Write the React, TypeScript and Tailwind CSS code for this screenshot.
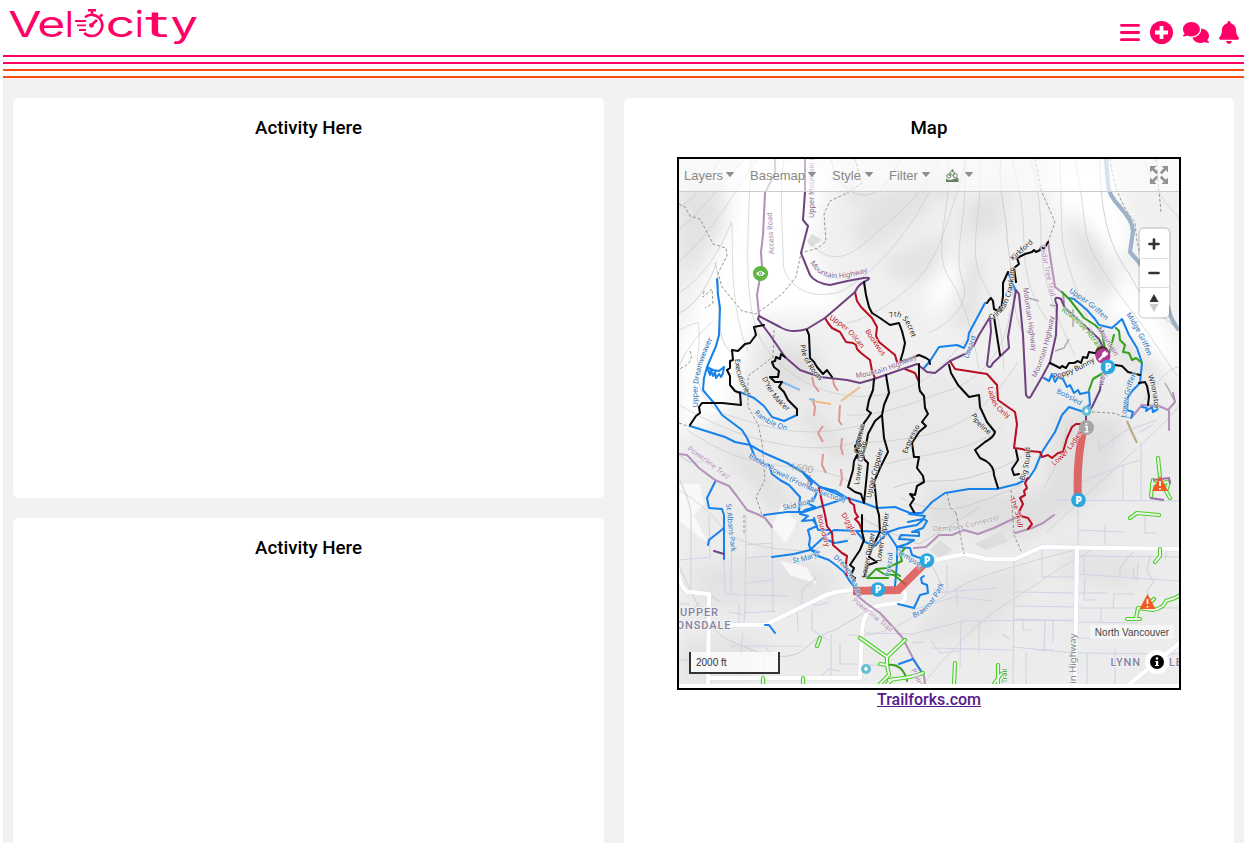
import React from "react";
import { FaBars, FaCirclePlus, FaComments, FaBell } from "react-icons/fa6";

const contours = [
  "M679 208 Q700 195 720 159", "M679 229 C700 214 716 190 744 159", "M679 261 C705 240 722 213 757 159",
  "M679 293 C715 271 733 219 731 222 C735 225 726 300 748 351", "M679 313 C705 302 720 255 715 263 C724 286 711 337 731 352",
  "M679 330 Q704 318 698 326 C705 345 680 391 724 414 C770 428 803 440 862 425",
  "M751 159 C748 238 742 300 761 340 C785 383 844 408 897 391 C940 379 950 353 966 340",
  "M784 159 C778 200 785 260 783 265 C787 286 811 302 842 291 C880 270 913 225 929 192",
  "M811 244 C836 270 855 250 870 239 C899 212 917 202 940 159", "M831 159 C839 199 870 202 884 186 L901 159",
  "M847 323 C878 317 918 284 929 264 C945 238 954 199 957 192 L967 159", "M948 159 C953 210 930 250 950 279 Q970 310 979 370",
  "M964 159 C970 210 952 250 962 279 C971 301 955 320 929 333", "M979 159 C985 210 965 249 983 282 C994 300 1006 338 1003 370",
  "M1001 159 C997 190 1008 218 1007 240 C1014 280 1010 310 1024 335", "M1012 159 Q1024 201 1024 245 T1047 320",
  "M1031 159 Q1042 200 1041 242 T1075 356", "M1060 159 Q1061 205 1062 235 T1107 365",
  "M1075 159 C1087 220 1082 233 1094 255 C1112 289 1136 314 1154 342 L1177 376",
  "M1100 159 C1100 220 1112 251 1129 273 Q1140 300 1179 330", "M1144 159 Q1152 190 1179 218",
  "M847 415 C888 418 930 394 954 389 C996 370 1009 331 1010 310", "M860 443 C910 440 940 435 970 417 Q1000 392 1018 362",
  "M886 464 C933 451 977 452 1001 426", "M893 488 C923 475 948 487 981 474 Q1004 468 1022 456", "M679 405 Q730 435 779 444 T858 441",
  "M687 430 Q735 463 782 466 T850 482", "M679 366 Q692 338 713 321", "M679 490 Q705 505 722 527 T809 551 L850 538",
  "M679 566 C698 607 705 622 723 637 C760 656 784 662 802 651 Q821 633 835 630 L867 611",
  "M848 635 Q876 639 907 621 Q950 590 974 580 T1074 550", "M925 682 Q967 629 1004 605 L1034 586 Q1070 560 1097 548",
  "M1046 533 Q1090 491 1135 450 T1179 404", "M1140 405 Q1168 366 1179 367",
  "M855 514 Q880 530 919 544 Q954 524 980 507", "M901 498 Q938 516 970 505 T1022 485", "M1044 488 Q1063 455 1067 427",
];
const streets = [
  "M691 515 L691 589 M680 560 L710 557 L709 515 M715 576 L725 576 M724 555 L725 594 L741 595 M732 515 L731 594",
  "M746 515 L745 613 L776 611 M772 528 L773 612 M745 545 L772 543 M745 558 L772 556 M746 583 L772 580 M745 595 L790 596",
  "M709 594 L721 603 M739 603 L739 624 M729 612 L743 615 M745 612 L744 622 M690 604 L679 604",
  "M743 632 L741 648 L744 670 L743 678 M763 656 L763 678 M730 646 L802 646 M764 646 L775 658",
  "M816 578 L802 590 L802 604 L820 605 L829 602 M797 608 L798 631 M831 634 L831 678 M840 643 L840 664 L859 664",
  "M812 610 L812 630 L828 640 M820 678 L828 669 L841 671 M679 660 L704 660 M688 617 L699 603",
  "M866 665 L898 665 M866 633 L912 634 L964 621 L1075 620 M961 621 L960 667 M979 621 L979 653",
  "M913 610 L954 597 L992 601 M957 588 L957 604 M947 565 L947 592 L997 588 M933 567 L945 593 L934 590",
  "M1014 559 L1013 684 M931 648 L1011 650 M1002 634 L1010 639 M931 641 L940 653 L959 651",
  "M1042 546 L1042 577 L1075 577 M1013 592 L1073 593 M1013 606 L1075 607 M1013 619 L1073 621 M1013 647 L1073 653",
  "M1023 621 L1023 630 L1031 630 M1045 620 L1044 652 M1053 621 L1053 642 M1026 653 L1026 684 M1038 650 L1054 650",
  "M1077 556 L1179 557 M1077 574 L1179 581 M1077 593 L1107 593 M1078 608 L1179 608 M1077 622 L1138 623 M1077 653 L1179 654",
  "M1084 555 L1084 574 M1085 578 L1084 600 L1097 600 M1112 594 L1134 594 M1114 595 L1113 608 M1133 552 L1120 568 L1120 578",
  "M1133 568 L1134 579 L1138 579 M1138 563 L1137 580 M1150 557 L1147 571 L1154 582 L1147 590 L1150 608 M1167 550 L1165 560",
  "M1078 638 L1105 638 M1087 653 L1087 684 M1115 649 L1115 684 M1101 608 L1101 623 M1105 545 L1105 525",
  "M1056 500 L1179 501 M1080 482 L1123 465 L1123 500 M1098 451 L1123 432 L1157 420 M1141 443 L1141 500 M1123 465 L1140 460",
  "M1078 501 L1078 546 M1145 515 L1145 533 L1157 533 M1100 448 L1098 438 M1114 434 L1113 447 M1078 530 L1124 532",
  "M679 479 Q690 500 691 515 M679 455 L689 462 L708 462 M912 643 L925 642 M1140 432 L1153 425",
];
const roads = [
  "M677 564 Q680 592 690 592 L709 594 L708 684", "M708 678 L860 678 L862 632 Q863 611 877 606 Q891 603 901 603 Q908 598 904 591",
  "M729 625 H765 L820 598 Q834 590 857 590", "M926 562 L964 554 L987 559 H1015 L1042 547 L1180 549", "M1077 548 L1075 684", "M1182 641 L1127 686",
];
const dashed = [
  "M679 204 L685 207 L690 216 L700 219 L710 238 L713 244 L726 248 L727 256 L718 273 L722 287 L742 311 L756 314 L767 306 L783 293 L796 277 L801 253 L818 248 L826 241 L824 214 L830 201 L847 193 L862 183 L855 159",
  "M704 291 L703 297 L712 289 L713 303 L705 308 M690 351 Q695 363 679 369 M679 423 L690 427",
  "M774 330 L773 357 L748 376 L748 407 L758 424 L762 442 L765 480 L756 497 L762 515",
  "M1035 159 L1041 190 L1055 222 L1048 242 M1110 159 Q1115 199 1135 222 Q1137 250 1143 260 M1156 159 L1161 212",
  "M1092 412 L1113 413 L1129 418 M1011 490 L1014 535 L1022 553 M947 493 L950 507 L957 514 M956 513 L964 554 M744 515 L744 535",
];
type Line = { d: string; c: string };
const BLUE = "#1682ea", RED = "#bb0d20", PURPLE = "#70427f", LILAC = "#b491b8", GREEN = "#35a11d", BLACK = "#080808";
const trails: Line[] = [
  { c: LILAC, d: "M775 159 L775 173 L765 193 L763 235 L761 252 L762 266 L757 295 L759 315" },
  { c: LILAC, d: "M679 454 L687 455 L699 468 L715 480 L729 486 L736 495 L747 510 L757 514 L765 518 L772 527 M854 593 L866 603 L880 613 L891 625 L902 637 L914 660 L924 676 L925 684" },
  { c: LILAC, d: "M914 548 L926 547 L939 535 L952 535 L964 530 L978 534 L994 528 L1017 517 M1015 533 L1032 528 L1043 523 L1054 515 M1132 417 L1142 405 L1159 406 L1168 410 L1175 402 L1173 393 M1169 411 L1169 430 M1048 242 L1052 268 L1055 287 L1063 293 L1064 303" },
  { c: BLUE, d: "M717 279 L718 295 L720 308 L719 335 L716 346 L707 367 L710 375 L711 370 L713 376 L715 372 L716 378 L719 374 L721 377 L723 373 L724 367 L719 371 L713 370 L707 367 L704 378 L703 390 L707 395 L714 403 L722 415 L742 430 L747 438 L750 445 L764 453 L787 463 L804 473 L820 487 L836 491 L847 498 L864 503 L877 508 L895 507 L910 513 L922 513 L932 502 L945 493 L969 489 L997 489 L1017 484 L1029 478 L1035 469 L1042 452 L1055 432 L1062 415 L1069 407 L1084 412" },
  { c: BLUE, d: "M690 426 L725 437 L735 442 L750 445 L755 457 L762 463 L769 465 L772 474 L780 480 L789 485 L800 497 L799 512 M764 515 L787 512 L804 512 L847 498 M820 487 L837 494 L845 499" },
  { c: BLUE, d: "M740 392 L754 398 L764 406 L772 417 L784 421 L797 415 M924 368 L930 361 L939 347 L957 345 L964 348 L968 340 L969 333 L985 303 M1008 272 L1016 292" },
  { c: BLUE, d: "M1069 298 L1074 299 L1087 310 L1095 319 L1099 325 L1112 328 L1122 319 L1129 335 L1137 348 L1142 363 L1140 383 L1133 390 L1128 397 L1127 410 L1133 412 L1131 418 M1044 378 L1049 381 L1052 374 L1055 382 L1058 377 L1063 379 L1067 387 L1070 385 L1074 393 L1078 390 L1080 394 L1089 392 L1090 405 L1085 408 M1142 407 L1147 408 L1146 411 L1152 407 L1153 412 L1158 409" },
  { c: BLUE, d: "M772 557 L794 554 L810 550 L824 537 L834 530 L860 531 L887 532 L897 547 L897 563 L895 586 M810 548 L818 556 L829 560 L837 566 L844 572 L849 580 L856 589 M715 482 L707 498 L709 508 L722 509 L724 515 L724 559 M724 528 L709 540 L708 545" },
  { c: BLUE, d: "M804 474 L812 483 L808 488 L817 492 L814 499 L807 503 L815 507 L805 510 L800 514 L808 516 L802 521 L813 520 L817 526 L808 530 L810 538 L809 545 L811 550 M814 518 L818 530 L830 530 M827 540 L835 543 L847 541 M810 550 L819 552" },
  { c: BLUE, d: "M857 532 L865 542 L875 546 L888 532 L900 528 L917 525 L924 519 L927 521 L923 528 L912 532 L919 532 L919 536 L901 535 L899 539 L914 540 L907 544 L897 547 L910 548 L912 555 L917 557 L927 560 M909 514 L925 516 L923 519 L908 522 M765 625 L769 625 L775 633 M924 576 L921 578 L922 583 L927 585 L928 593 L920 595 L914 608 L898 604 M899 664 L913 659 L923 674" },
  { c: RED, d: "M825 318 L828 323 L832 328 L840 332 L846 342 L853 343 L856 345 L857 349 L861 353 L870 360 L872 371 L875 378 M855 292 L857 301 L861 307 L872 318 L877 327 L876 336 L879 342 L895 355 L897 362 M905 369 L915 373 L919 382 M950 361 L955 369 L987 374 L997 385 L998 400 L1015 412 L1017 424 L1014 448 L1022 449 L1029 451 L1040 452 L1042 457 L1048 455 L1052 458 L1058 453 L1063 452 L1067 438 L1072 427 L1076 424 L1083 424" },
  { c: RED, d: "M1028 478 L1025 483 L1027 488 L1024 491 L1025 495 L1020 498 L1023 504 L1019 512 L1021 516 L1028 518 L1032 524 L1028 529 M819 488 L822 502 L825 515 L827 526 L832 533 L833 545 L842 553 L847 556 L846 563 L847 575 M849 498 L850 502 L854 505 L855 512 L858 517 L855 519 L859 523 L862 530" },
  { c: PURPLE, d: "M805 159 L805 192 L803 220 L808 226 L801 253 L810 275 Q815 283 830 285 Q850 280 864 278 Q874 277 864 282 Q858 285 855 292 L847 299 L825 318 L807 329 Q791 334 780 327 L759 316 L758 319 L770 335 L785 357 L800 370 L820 377 L847 380 L860 383 L874 379 L917 364 L927 372 L935 373 L950 361 L967 353 L974 345 L979 335 L990 317 L991 331 L987 365 Q990 370 993 363 L1009 348 L1008 337 L1016 290 L1019 294 L1023 335 L1026 395 Q1029 400 1031 396 L1042 377 L1050 362 L1056 335 L1057 305 Q1052 295 1061 299 L1065 308 L1084 325 L1099 339 L1105 352 M1102 375 L1100 390 L1092 407 L1086 415 L1086 425 M714 551 L724 554" },
  { c: GREEN, d: "M1062 292 L1070 300 L1084 318 L1095 325 L1102 332 L1105 350 M1116 328 L1119 331 L1120 340 L1125 345 L1123 352 L1129 353 L1132 360 L1136 358 L1142 363 M1114 335 L1109 354 M1103 373 L1093 379 L1089 390 M905 548 L900 554 L902 561 L887 568 L876 569 L884 574 L894 575 L905 584 M891 570 L900 576 M875 570 L867 578 L888 578 M887 665 Q903 663 907 681" },
  { c: BLACK, d: "M764 325 L754 327 L756 335 L750 343 L745 344 L741 348 L738 351 L732 350 L733 360 L730 361 L730 368 L727 370 L730 376 L730 385 L735 391 L740 393 L741 405 L722 403 L702 403 L699 407 L700 413 L696 416 L690 425 M785 357 L781 354 L780 359 L776 357 L775 361 L772 362 L774 367 L779 371 L778 377 L770 377 L775 382 L782 382 L779 387 L784 392 L788 400 L797 409 L797 415" },
  { c: BLACK, d: "M807 330 L809 335 L810 358 L814 362 L817 367 L823 374 L827 370 L832 377 M864 282 L866 295 L869 307 L872 313 L880 318 L890 325 L899 323 L902 331 L905 343 L903 352 L900 362 L909 359 L919 355 L926 358 L929 360 L930 364 M987 303 L989 300 L991 298 L993 301 L994 309 L998 311 L1000 307 L1001 311 L1003 296 L1003 283 L1008 272 M1016 282 L1014 268 L1019 264 L1017 258 L1025 254 L1032 252 L1034 250 L1036 252 L1040 250 L1041 247 L1044 249 L1048 242" },
  { c: BLACK, d: "M874 379 L873 390 L869 400 L867 410 L871 413 L867 419 L864 423 L862 431 L859 435 L860 441 L855 446 L858 453 L854 461 L853 470 L848 487 L855 492 L861 494 L864 503 M886 375 L889 393 L884 405 L882 415 L875 421 L868 434 L866 445 L863 454 L864 459 L868 463 L864 503 M882 415 L884 438 L888 452 L880 468 L874 482 L875 489 L877 508 L879 515 L880 532 L872 548 L869 557 L877 562 L868 565 L864 577" },
  { c: BLACK, d: "M919 364 L919 386 L920 391 L924 396 L925 408 L928 414 L922 422 L926 426 L919 432 L912 443 L914 457 L919 457 L917 468 L923 476 L924 482 L917 486 L915 495 L910 494 L914 499 L910 505 L914 512 M949 365 L951 373 L958 385 L969 397 L979 395 L980 407 L987 422 L995 432 Q994 437 985 442 L975 450 L980 458 L986 461 Q994 466 994 475 L998 488" },
  { c: BLACK, d: "M1050 363 L1056 366 L1060 368 L1062 366 L1066 368 L1069 363 L1074 363 L1078 361 L1081 363 L1083 357 L1087 358 L1089 352 L1094 353 L1102 352 M1115 365 L1122 366 L1128 372 L1140 375 M1139 383 L1145 382 L1147 386 L1149 396 L1148 405 M1016 450 L1018 460 L1012 469 L1014 475 L1019 474 M862 515 L862 532 L864 540 L860 550 L850 565 L854 568 L851 575 L855 578 L853 582" },
  { c: BLACK, d: "M994 317 L1000 355 M860 433 L857 442 L861 445 L855 450 L860 452 L857 458" },
];
const outlined = [
  "M860 638 L887 657 L905 640 M887 657 V665 L880 664 M887 665 L889 675 L880 684 M889 680 L910 677 L923 673 M887 684 L893 679",
  "M955 663 L954 684 M998 665 V684 M994 684 L1001 674 M820 638 L817 646 M803 678 V684 M763 678 V684",
  "M1158 458 L1160 477 M1153 480 L1151 496 M1130 518 L1137 513 L1159 515 M1160 549 L1160 556 L1155 562",
  "M1127 619 H1140 M1136 618 L1138 608 L1153 610 Q1164 608 1166 601 L1175 598 L1182 594 M1144 607 L1154 599",
  "M1152 484 L1169 482 L1166 491 L1170 498",
];
type Lb = [string, string, string, number?];
const labels: Lb[] = [
  ["Access Road", "M774 254 L772 215", "#b18cb5"], ["Upper Mountain Highway", "M814 218 L814 130", "#855d91"],
  ["Mountain Highway", "M810 263 Q824 287 864 273", "#855d91"], ["Mountain Highway", "M856 378 Q885 374 916 359", "#855d91"],
  ["Mountain Highway", "M1023 288 L1032 352", "#855d91"], ["Mountain Highway", "M1036 378 Q1050 347 1054 316", "#855d91"],
  ["Upper Oilcan", "M829 319 Q847 328 862 350", RED], ["Bookwus", "M865 331 Q872 343 883 357", RED],
  ["7th Secret", "M890 318 Q904 311 912 338", "#181818"], ["Kirkford", "M1013 261 L1032 244", "#181818"],
  ["Crinkum Crankum", "M990 320 Q1011 313 1014 275", "#181818"], ["Cedar Tree Trail", "M1040 245 L1051 299", "#b18cb5"],
  ["Upper Griffen", "M1069 292 Q1085 302 1104 319", "#2370bd"], ["Midge Griffen", "M1126 315 Q1137 329 1148 357", "#2370bd"],
  ["Roadside Attraction", "M1061 311 Q1086 326 1111 369", GREEN], ["Mountain", "M1097 329 L1112 352", "#855d91"], ["way", "M1103 386 L1106 374", "#855d91"],
  ["Poppy Bunny", "M1054 379 Q1074 374 1094 362", "#181818"], ["Bobsled", "M1056 393 Q1068 398 1081 406", "#2370bd"],
  ["Upper Dreamweaver", "M698 407 Q694 377 712 340", "#2370bd"], ["Lower Griffen", "M1126 418 Q1127 396 1135 377", "#2370bd"],
  ["Whonator", "M1148 376 Q1153 389 1154 406", "#181818"], ["Executioner", "M735 359 Q735 376 747 396", "#181818"],
  ["D'Yer Mak'er", "M762 378 Q771 399 788 412", "#181818"], ["Ramble On", "M754 413 Q765 425 785 430", "#2370bd"],
  ["Pile of Roots", "M800 345 Q803 365 819 380", "#181818"], ["Lizzard", "M968 359 Q973 346 977 333", "#2370bd"],
  ["Baden Powell (Fromme Section)", "M748 457 Q792 486 842 502", "#2370bd"], ["Skid Road", "M783 510 Q801 508 818 500", "#2370bd"],
  ["Powerline Trail", "M687 450 Q702 459 725 478", "#b18cb5"], ["Powerline Trail", "M852 601 Q870 616 890 632", "#b18cb5"],
  ["St Albans Park", "M726 504 L731 550", "#2370bd"], ["St Marys", "M793 563 Q815 561 825 548", "#2370bd"],
  ["Boundary", "M817 515 L825 547", RED], ["Diggler", "M841 515 Q848 524 853 539", RED],
  ["Dreamweaver", "M833 558 Q850 570 857 596", "#2370bd"], ["Ladies Only", "M988 387 Q990 409 1008 418", RED],
  ["Lower Ladies", "M1054 466 Q1073 451 1083 431", RED], ["Pipeline", "M971 415 Q975 425 989 435", "#181818"],
  ["Expresso", "M907 454 Q911 441 918 430", "#181818"], ["Lower Oilcan", "M859 485 Q862 462 867 441", "#181818"],
  ["Upper Crippler", "M871 498 Q875 477 883 451", "#181818"], ["Crowmie", "M859 454 L864 427", "#181818"],
  ["Lower Crippler", "M881 562 Q884 538 889 514", "#181818"], ["Lower Digger", "M866 578 L874 538", "#181818"],
  ["Big Stupid", "M1024 481 Q1030 465 1030 449", "#181818"],
  ["The Skull", "M1009 499 Q1017 510 1018 532", RED], ["Dempsey Connector", "M933 531 Q957 532 997 520", "#a498a7"],
  ["Dempsey", "M895 553 Q909 560 922 569", "#2370bd"], ["Penzoil", "M890 577 L893 553", "#2370bd"], ["Braemar Park", "M914 618 Q932 610 941 590", "#2370bd"],
  ["Mountain Highway", "M1076 719 L1076 637", "#8b8989", 9.6], ["Trail", "M1007 683 L1007 665", GREEN], ["Prairie", "M911 670 L922 692", "#a084a4"],
];

// Continues a label's baseline in its final direction so long names are never clipped.
function extend(d: string) {
  const n = (d.match(/-?\d+(\.\d+)?/g) ?? []).map(Number);
  const [ax, ay, bx, by] = n.slice(-4);
  const k = 30 / Math.hypot(bx - ax, by - ay);
  return `${d} L${(bx + (bx - ax) * k).toFixed(1)} ${(by + (by - ay) * k).toFixed(1)}`;
}

function Parking({ x, y }: { x: number; y: number }) {
  return <g><circle cx={x} cy={y} r="7.3" fill="#2aa7de" /><text x={x} y={y + 3.8} textAnchor="middle" fontSize="10.5" fontWeight="800" fill="white" fontFamily="Open Sans, sans-serif">P</text></g>;
}
function Warning({ x, y }: { x: number; y: number }) {
  return <g transform={`translate(${x} ${y})`}><path d="M0 -8 L8 7 H-8Z" fill="#f15a20" /><path d="M0 -3 V2 M0 4 V5.5" stroke="white" strokeWidth="1.7" /></g>;
}

function TrailMap() {
  return (
    <svg className="block h-[525px] w-[500px]" viewBox="679 159 500 525" aria-label="Trail map">
      <defs><filter id="soft" x="-40%" y="-40%" width="180%" height="180%"><feGaussianBlur stdDeviation="9" /></filter></defs>
      <rect x="679" y="159" width="500" height="525" fill="#f0f0f0" />
      <g filter="url(#soft)">
        <path d="M679 350 L760 330 L860 395 L1020 370 L1179 390 V684 H679Z" fill="#ececec" />
        <path d="M735 159 H835 L810 250 L850 310 L760 315 L727 410 L679 435 V340 L728 230Z" fill="#fff" />
        <path d="M679 190 L715 179 L725 220 L700 260 L679 280Z M850 230 L879 190 L936 175 L925 215 L865 253Z M885 258 L953 232 L925 285 L888 275Z M960 205 L1010 184 L1000 230 L964 241Z" fill="#e2e2e2" />
        <path d="M926 286 L958 255 L960 285 L930 320Z M1045 159 H1110 L1133 244 L1110 262 L1060 224Z M1108 270 L1138 275 L1150 300 L1179 350 V380 L1105 310Z" fill="#fff" />
        <path d="M840 390 L940 370 L1010 400 L1005 470 L930 480 L850 460Z" fill="#e9e9e9" />
        <path d="M1065 205 L1100 243 L1120 290 L1105 297 L1075 250Z M1058 410 L1127 420 L1110 489 L1020 540 L965 525 L1045 490Z M930 487 L1035 490 L1010 518 L920 535Z M760 345 L820 350 L822 385 L775 390Z M710 435 L755 455 L804 520 L773 510Z" fill="#dfdfdf" />
        <path d="M691 568 L775 552 L840 575 L825 604 L700 607Z M1060 545 L1150 560 L1130 590 L1060 580Z M958 575 L1040 568 L990 635 L908 645Z M679 641 L765 636 L750 684 H679Z" fill="#e3e3e3" />
        <path d="M844 190 L867 196 M935 197 L955 180 M975 258 L964 330 M1107 338 L1160 377 M805 410 L845 460" stroke="#dadada" strokeWidth="12" />
      </g>
      <path d="M680 484 L700 484 L704 504 L694 515 L708 543 L680 522Z M772 527 L782 504 L797 522 L786 543Z M780 561 L806 567 L817 584 L790 575Z" fill="#fafafa" opacity=".85" />
      <path d="M812 234 L822 240 L811 247 L807 241Z M930 550 L940 540 L953 550 L940 558Z M974 544 L1002 531 L1008 542 L986 550Z" fill="#dddddd" />
      <g fill="none">
        <g stroke="#c5c5c5" strokeWidth=".8">{contours.map((d, i) => <path key={i} d={d} opacity={i % 5 === 4 ? 1 : 0.75} />)}</g>
        <g stroke="#d0d3e4" strokeWidth="1.1">{streets.map((d, i) => <path key={i} d={d} />)}</g>
        <g stroke="#deddeb" strokeWidth="5.2" strokeLinejoin="round">{roads.map((d, i) => <path key={i} d={d} />)}</g>
        <g stroke="#fff" strokeWidth="4" strokeLinejoin="round">{roads.map((d, i) => <path key={i} d={d} />)}</g>
        <g stroke="#979488" strokeWidth="1" strokeDasharray="3 2">{dashed.map((d, i) => <path key={i} d={d} />)}</g>
        <path d="M1106 159 L1108 184 Q1108 194 1120 207 Q1133 221 1133 231 L1130 252 L1143 267 L1168 307 Q1171 321 1179 330" stroke="#9eb3c8" strokeWidth="4.2" />
        <path d="M812 377 L814 385 L819 392 M833 378 L834 385 L838 391 M812 399 L815 407 L814 416 M840 405 L839 421 L842 425 M823 426 L818 433 L823 442 M842 438 L841 448 L843 455 M823 454 L822 465 L826 473 M841 469 L842 479 L840 486 M810 475 L808 484" stroke="#dc9898" strokeWidth="2" />
        <path d="M812 401 L831 404 M841 401 L860 387" stroke="#efbd84" strokeWidth="2" /><path d="M780 381 L800 390 M809 399 L815 400" stroke="#87bdeb" strokeWidth="2" />
        <path d="M1028 298 L1039 301 M1050 305 L1056 306 M1073 309 L1073 327 M1055 351 L1064 348 L1069 339 M1165 383 L1169 390 L1174 400" stroke="#aaa" strokeWidth="1.5" />
        <path d="M1127 421 L1130 428 L1137 443" stroke="#b9a77e" strokeWidth="2" />
        <g strokeWidth="2.05" strokeLinejoin="round" strokeLinecap="round">{trails.map((t, i) => <path key={i} d={t.d} stroke={t.c} />)}</g>
        <g stroke="#49cf26" strokeWidth="4.2" strokeLinecap="round" strokeLinejoin="round">{outlined.map((d, i) => <path key={i} d={d} />)}</g>
        <g stroke="#f0f3ed" strokeWidth="2" strokeLinecap="round" strokeLinejoin="round">{outlined.map((d, i) => <path key={i} d={d} />)}</g>
        <path d="M1153 480 L1169 478 L1170 484 M1150 498 L1164 500" stroke="#9d6ca3" strokeWidth="2" />
        <path d="M853 591 L898 590 L927 561 M1084 426 Q1076 461 1078 499" stroke="#d44" strokeOpacity=".78" strokeWidth="8" />
      </g>
      <text x="790" y="470" fontSize="10" fill="#aaa99f" fontFamily="Open Sans, sans-serif" transform="rotate(8 790 470)">1600</text>
      <g fontFamily="Noto Sans, Open Sans, sans-serif" stroke="#f4f4f4" strokeOpacity=".75" strokeWidth="1.2" paintOrder="stroke" strokeLinejoin="round">
        {labels.map(([t, d, c, s], i) => <React.Fragment key={i}><path id={`trail-${i}`} d={extend(d)} fill="none" stroke="none" /><text fill={c} fontSize={s ?? 7.2}><textPath href={`#trail-${i}`}>{t}</textPath></text></React.Fragment>)}
      </g>
      <g fill="#85849e" stroke="#f2f2f5" strokeWidth="2" paintOrder="stroke" fontFamily="Roboto, sans-serif" fontSize="11" fontWeight="500" letterSpacing=".9">
        <text x="680" y="615.5">UPPER</text><text x="670" y="628.7">LONSDALE</text><text x="1110.5" y="666">LYNN</text><text x="1169" y="666">LEY</text>
      </g>
      <g transform="translate(760.5 273.5)"><circle r="7.6" fill="#61b744" /><path d="M-4.5 0 Q0 -5 4.5 0 Q0 5 -4.5 0Z" fill="white" /><circle r="1.8" fill="#61b744" /><circle r=".8" fill="white" /></g>
      <circle cx="1102" cy="353" r="7" fill="#4c3021" /><circle cx="1103" cy="356" r="7.5" fill="#b03a94" /><path d="M1099.5 359.5 L1104 355 M1103 354 L1105 352 M1104 356 L1107 353.5" stroke="white" strokeWidth="2.3" strokeLinecap="round" />
      <Parking x={1108} y={367} /><Parking x={1078.5} y={500} /><Parking x={927} y={560.5} /><Parking x={878} y={589.5} />
      <g fill="#62bfd4"><circle cx="1086.5" cy="411" r="5" /><circle cx="866" cy="669" r="5" /></g><path d="M1086.5 408 l2 3 q-2 4 -4 0Z M866 666 l2 3 q-2 4 -4 0Z" fill="white" />
      <circle cx="1086.5" cy="427.5" r="7.5" fill="#a5a5a5" /><path d="M1086.5 422.8 v2 M1085 426.5 h2 v5 M1084.5 431.8 h4" stroke="white" strokeWidth="1.6" fill="none" />
      <Warning x={1160} y={484} /><Warning x={1147.5} y={602} />
    </svg>
  );
}
const Caret = () => <svg className="mb-0.5 h-[5px] w-2" viewBox="0 0 8 5"><path d="M0 .5 Q0 0 .5 0 H7.5 Q8 0 8 .6 L4.6 4.6 Q4 5.2 3.4 4.6 L0 .6Z" fill="#8e8e8e" /></svg>;

function MapPanel() {
  return (
    <div className="relative h-[533px] w-[504px] shrink-0 overflow-hidden border-2 border-black bg-white">
      <TrailMap />
      <div className="absolute inset-x-0 top-0 flex h-[33px] items-center border-b border-[#cccccc] bg-white/60 pl-[5px] pt-px font-['Liberation_Sans',sans-serif] text-[13px] text-[#888888]">
        <div className="flex w-[66px] items-center gap-[3px]"><span>Layers</span><Caret /></div>
        <div className="flex w-[82px] items-center gap-[3px]"><span>Basemap</span><Caret /></div>
        <div className="flex w-[57px] items-center gap-1"><span>Style</span><Caret /></div>
        <div className="flex w-[57px] items-center gap-1"><span>Filter</span><Caret /></div>
        <div className="flex items-center gap-[6px]">
          <svg className="h-[14px] w-[13px]" viewBox="0 0 13 14"><path d="M0 9.5 C4 13 7 9 12.5 9 V13 H0Z" fill="#648461" /><g fill="none" stroke="#648461"><circle cx="2.8" cy="7" r="2" /><circle cx="9.3" cy="6.7" r="2" /><path d="M3 7 L4.5 4 L7 6.5 L9 4 L5.5 2 L3.6 4" /></g><circle cx="6.5" cy="1.4" r="1.1" fill="#648461" /></svg><Caret />
        </div>
      </div>
      <svg className="absolute left-[471px] top-[7px] h-[18px] w-[18px]" viewBox="0 0 18 18" fill="#929292" stroke="#929292">
        {[0, 90, 180, 270].map((a) => <g key={a} transform={`rotate(${a} 9 9)`}><path d="M0 0 H6.5 L0 6.5Z" stroke="none" /><path d="M2.5 2.5 L7.2 7.2" strokeWidth="2.7" /></g>)}
      </svg>
      <div className="absolute left-[461px] top-[70px] flex h-[88px] w-[29px] flex-col rounded bg-white shadow-[0_0_0_2px_rgba(0,0,0,0.1)]">
        <div className="flex h-[30px] items-center justify-center border-b border-[#ddd] pr-px"><svg className="h-3 w-3" viewBox="0 0 12 12"><path d="M6 1.5 V10.5 M1.5 6 H10.5" stroke="#333" strokeWidth="2.7" strokeLinecap="round" /></svg></div>
        <div className="flex h-[29px] items-center justify-center border-b border-[#ddd] pr-px"><svg className="h-3 w-3" viewBox="0 0 12 12"><path d="M1.5 6 H10.5" stroke="#333" strokeWidth="2.7" strokeLinecap="round" /></svg></div>
        <div className="flex flex-1 items-center justify-center pr-px"><svg className="h-[18px] w-[10px]" viewBox="0 0 10 18"><path d="M.5 8 L5 0 L9.5 8Z" fill="#333" /><path d="M.5 10 L5 18 L9.5 10Z" fill="#ccc" /></svg></div>
      </div>
      <div className="absolute left-[10px] top-[493px] h-[22px] w-[91px] border-2 border-t-0 border-[#333] bg-white/75 pl-[5px] font-['Liberation_Sans',sans-serif] text-[10px] leading-[21px] text-[#333]">2000 ft</div>
      <div className="absolute left-[411px] top-[466px] flex h-[14px] w-[84px] items-center justify-center bg-white/50 font-['Liberation_Sans',sans-serif] text-[10px] text-[#444]">North Vancouver</div>
      <div className="absolute left-[466px] top-[491px] flex h-6 w-6 items-center justify-center rounded-full bg-white">
        <svg className="h-[14px] w-[14px]" viewBox="0 0 14 14"><circle cx="7" cy="7" r="7" /><circle cx="7" cy="3.5" r="1.3" fill="white" /><path d="M5.3 6 H8.2 V10 H9 V11 H5 V10 H6 V7 H5.3Z" fill="white" /></svg>
      </div>
    </div>
  );
}
function Logo() {
  return (
    <svg className="block h-[55px] w-[210px]" viewBox="0 0 210 55" aria-label="Velocity" fill="#ff0066">
      <g fontFamily="Inter, sans-serif" fontSize="35.5" fontWeight="400">
        <text x="8.3" y="36.5" textLength="33.4" lengthAdjust="spacingAndGlyphs">V</text>
        <text x="37.2" y="36.5" textLength="28" lengthAdjust="spacingAndGlyphs">e</text>
        <text x="65" y="36.5">l</text>
        <text x="105.8" y="36.5" textLength="29.5" lengthAdjust="spacingAndGlyphs">c</text>
        <text x="135" y="36.5">i</text>
        <text x="145" y="36.5" textLength="24" lengthAdjust="spacingAndGlyphs">t</text>
        <text x="170.5" y="36.5" textLength="27.5" lengthAdjust="spacingAndGlyphs">y</text>
      </g>
      <g fill="none" stroke="#ff0066">
        <path d="M85 17.2 A10.6 10.6 0 1 1 84.3 33" strokeWidth="2.6" /><path d="M88 10.2 H96 M92 10 V14.5 M100 16.5 L102.5 14.5" strokeWidth="2.5" />
        <path d="M75 21 H86 M77 25.4 H86 M79 30 H86" strokeWidth="1.9" /><path d="M91.5 25 L97 20" strokeWidth="2.6" />
      </g><circle cx="91.5" cy="25.3" r="2.4" />
    </svg>
  );
}
export default function App() {
  return (
    <div className="flex h-[843px] w-[1244px] flex-col overflow-hidden bg-white font-[Roboto,sans-serif] text-black">
      <header className="flex h-[55px] shrink-0 items-start justify-between pr-[5px]">
        <Logo />
        <nav className="flex items-center gap-[10px] pt-[21px] text-[#ff0066]">
          <FaBars className="h-[23px] w-5" />
          <svg className="h-[23px] w-[23px]" viewBox="0 0 23 23"><circle cx="11.5" cy="11.5" r="11.5" fill="currentColor" /><path d="M11.5 5 V18 M5 11.5 H18" stroke="white" strokeWidth="3.8" /></svg>
          <FaComments className="h-[23px] w-[26px]" /><FaBell className="h-[23px] w-5" />
        </nav>
      </header>
      <div className="ml-[3px] flex shrink-0 flex-col gap-[5px]">
        <div className="h-0.5 bg-[#ff0066]" /><div className="h-0.5 bg-[#ff0066]" /><div className="h-0.5 bg-[#ff4d0d]" /><div className="h-0.5 bg-[#ff4d0d]" />
      </div>
      <main className="ml-[3px] flex min-h-0 flex-1 gap-5 bg-[#f2f2f2] px-[10px] pt-5">
        <div className="flex w-[591px] shrink-0 flex-col gap-5">
          <section className="h-[400px] shrink-0 rounded-[5px] bg-white pt-[19px] text-center"><h2 className="text-[18.72px] font-medium leading-[22px]">Activity Here</h2></section>
          <section className="h-[400px] shrink-0 rounded-[5px] bg-white pt-[19px] text-center"><h2 className="text-[18.72px] font-medium leading-[22px]">Activity Here</h2></section>
        </div>
        <section className="flex h-[820px] min-w-0 flex-1 flex-col items-center rounded-[5px] bg-white pt-[19px]">
          <h2 className="mb-[18px] text-[18.72px] font-medium leading-[22px]">Map</h2>
          <MapPanel />
          <a href="#" className="text-base font-medium leading-5 text-[#551a8b] underline">Trailforks.com</a>
        </section>
      </main>
    </div>
  );
}
